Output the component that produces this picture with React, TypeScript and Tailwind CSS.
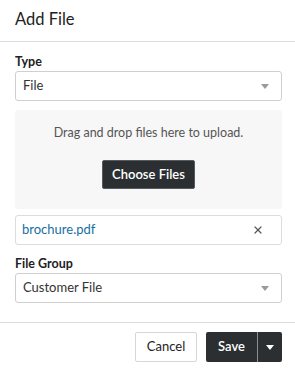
import { X } from "lucide-react";

function Caret({ className = "" }: { className?: string }) {
  return (
    <svg width="8" height="5" viewBox="0 0 8 5" className={className}>
      <path d="M0 0h8L4 5z" fill="currentColor" />
    </svg>
  );
}

function SelectBox({ value }: { value: string }) {
  return (
    <div className="flex h-[30px] items-center justify-between rounded-[3px] border border-[#cfcfcf] bg-white pl-[7px] pr-[12px] text-[13px] text-[#333]">
      <span>{value}</span>
      <Caret className="text-[#9a9a9a]" />
    </div>
  );
}

export default function App() {
  return (
    <div className="flex h-[369px] w-[295px] flex-col bg-white font-['Lato',sans-serif] text-[#222]">
      <div className="flex h-[42px] items-center border-b border-[#dcdcdc] pl-[15px] pb-[2px]">
        <h1 className="text-[16.5px] leading-none">Add File</h1>
      </div>

      <div className="flex flex-col pl-[15px] pr-[13px] pt-[12px]">
        <label className="mb-[1px] text-[12.5px] font-bold leading-[16px]">Type</label>
        <SelectBox value="File" />

        <div className="mt-[9px] flex h-[99px] flex-col items-center rounded-[3px] bg-[#f7f7f7] pt-[15px]">
          <p className="text-[12.5px] leading-[16px] text-[#555]">Drag and drop files here to upload.</p>
          <button className="mt-[19px] h-[29px] w-[93px] rounded-[2px] border border-[#555a5e] bg-[#2b2f32] text-[13px] font-semibold text-white">
            Choose Files
          </button>
        </div>

        <div className="mt-[6px] flex h-[30px] items-center justify-between rounded-[3px] border border-[#dcdcdc] pl-[6px] pr-[17px]">
          <span className="text-[13px] text-[#17709f]">brochure.pdf</span>
          <X size={12} strokeWidth={2.4} className="text-[#555]" />
        </div>

        <label className="mb-[1px] mt-[11px] text-[12.5px] font-bold leading-[16px]">File Group</label>
        <SelectBox value="Customer File" />
      </div>

      <div className="mt-[19px] flex justify-end gap-[9px] border-t border-[#dcdcdc] pl-[15px] pr-[13px] pt-[9px]">
        <button className="h-[30px] w-[62px] rounded-[2px] border border-[#d6d6d6] bg-white text-[13px] text-[#222]">
          Cancel
        </button>
        <div className="flex h-[30px] rounded-[2px] bg-[#2b2f32] text-white">
          <button className="w-[51px] text-[13px] font-semibold">Save</button>
          <div className="w-px bg-[#8a8e91]" />
          <button className="flex w-[24px] items-center justify-center">
            <Caret className="text-white" />
          </button>
        </div>
      </div>
    </div>
  );
}
